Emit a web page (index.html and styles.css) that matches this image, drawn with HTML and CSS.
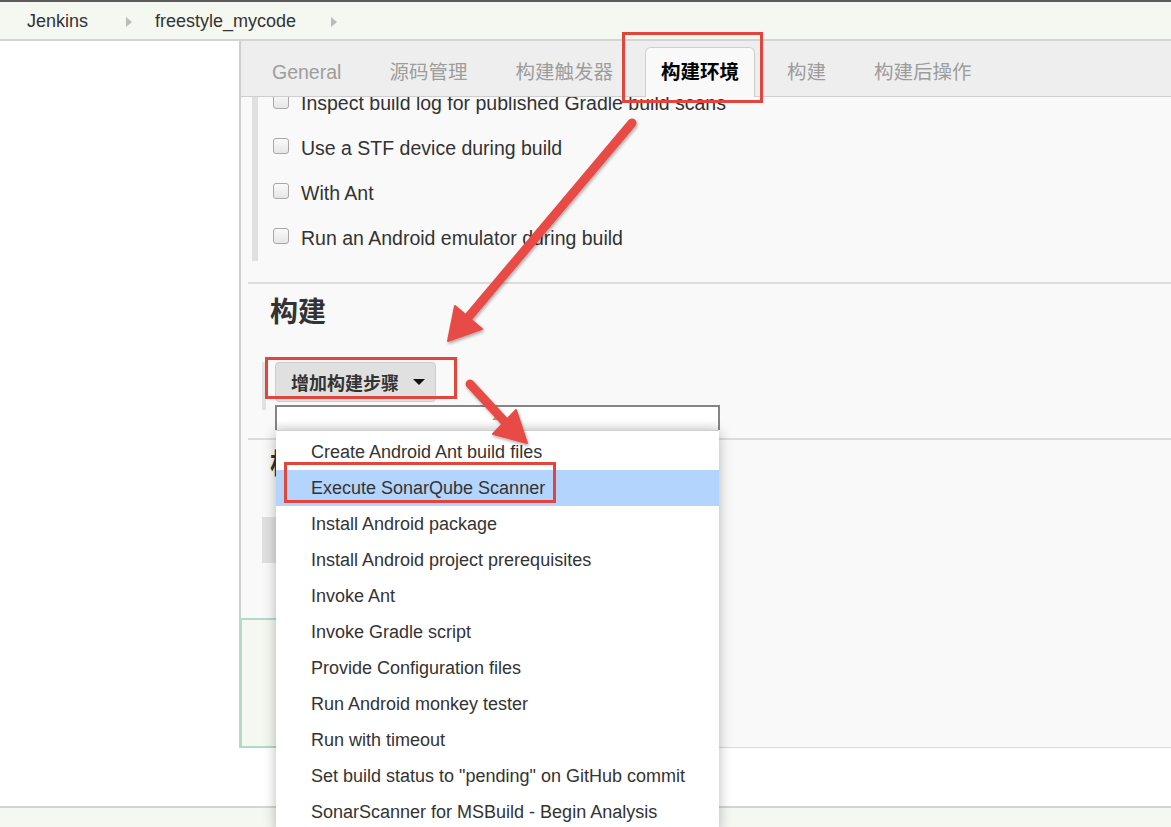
FILE: index.html
```html
<!DOCTYPE html>
<html lang="zh">
<head>
<meta charset="utf-8">
<title>freestyle_mycode Config [Jenkins]</title>
<link rel="stylesheet" href="styles.css">
</head>
<body>
<div class="app">
  <header class="crumbs">
    <span class="crumb">Jenkins</span><span class="crumb-sep sep1"></span>
    <span class="crumb">freestyle_mycode</span><span class="crumb-sep sep2"></span>
  </header>
  <div class="main">
    <aside class="side"></aside>
    <section class="panel">
      <nav class="tabs">
        <span class="tab">General</span>
        <span class="tab">源码管理</span>
        <span class="tab">构建触发器</span>
        <span class="tab active">构建环境</span>
        <span class="tab">构建</span>
        <span class="tab">构建后操作</span>
      </nav>
      <div class="content">
        <div class="env">
          <label class="opt"><span class="box"></span>Inspect build log for published Gradle build scans</label>
          <label class="opt"><span class="box"></span>Use a STF device during build</label>
          <label class="opt"><span class="box"></span>With Ant</label>
          <label class="opt"><span class="box"></span>Run an Android emulator during build</label>
        </div>
        <div class="rule"></div>
        <h2 class="heading">构建</h2>
        <div class="step-block">
          <div class="add-wrap">
            <button class="add-btn">增加构建步骤<span class="caret"></span></button>
            <div class="dropdown">
              <div class="filter"><span class="up"></span></div>
              <ul class="menu">
                <li>Create Android Ant build files</li>
                <li class="hl">Execute SonarQube Scanner</li>
                <li>Install Android package</li>
                <li>Install Android project prerequisites</li>
                <li>Invoke Ant</li>
                <li>Invoke Gradle script</li>
                <li>Provide Configuration files</li>
                <li>Run Android monkey tester</li>
                <li>Run with timeout</li>
                <li>Set build status to "pending" on GitHub commit</li>
                <li>SonarScanner for MSBuild - Begin Analysis</li>
              </ul>
            </div>
          </div>
        </div>
        <div class="rule rule2"></div>
        <h2 class="heading heading2">构建后操作</h2>
        <div class="post-add"></div>
        <div class="sticker"></div>
      </div>
    </section>
  </div>
  <div class="gap"></div>
  <footer class="footer"></footer>
</div>
<svg class="annot" width="1171" height="827" viewBox="0 0 1171 827">
  <defs>
    <filter id="sh" x="-20%" y="-20%" width="140%" height="140%">
      <feDropShadow dx="1" dy="2" stdDeviation="1.5" flood-color="#000" flood-opacity="0.3"/>
    </filter>
  </defs>
  <g filter="url(#sh)" fill="#e84c45" stroke="#e84c45">
    <line x1="632" y1="123" x2="466" y2="320" stroke-width="9" stroke-linecap="round"/>
    <polygon points="448,341 482,329 455,306" stroke-width="2" stroke-linejoin="round"/>
    <line x1="470" y1="384" x2="506" y2="423" stroke-width="9" stroke-linecap="round"/>
    <polygon points="527,443 493,434 516,410" stroke-width="2" stroke-linejoin="round"/>
  </g>
  <g fill="none" stroke="#e2453c" stroke-width="3">
    <rect x="623.5" y="33.5" width="138" height="68"/>
    <rect x="266.5" y="358.5" width="189" height="39"/>
    <rect x="285.5" y="463.5" width="269" height="38"/>
  </g>
</svg>
</body>
</html>
```

FILE: styles.css
```css
html, body {
  margin: 0;
  padding: 0;
  overflow: hidden;
  background: #fff;
}
body {
  font-family: "Liberation Sans", "Noto Sans CJK SC", Arial, sans-serif;
  color: #333;
  width: 1171px;
  height: 827px;
  position: relative;
}
.app {
  display: flex;
  flex-direction: column;
  height: 827px;
  border-top: 2px solid #5c5c5c;
  box-sizing: border-box;
}
.crumbs {
  display: flex;
  align-items: center;
  box-sizing: border-box;
  height: 39px;
  padding-top: 2px;
  background: #f5f7f1;
  border-bottom: 2px solid #d4d4d4;
  padding-left: 27px;
  font-size: 18px;
  color: #333;
  flex: none;
}
.crumb-sep {
  width: 0;
  height: 0;
  border-top: 5px solid transparent;
  border-bottom: 5px solid transparent;
  border-left: 6px solid #bbb;
}
.sep1 { margin: 0 23px 0 38px; }
.sep2 { margin-left: 35px; }
.main {
  display: flex;
  height: 707px;
  flex: none;
}
.side {
  width: 239px;
  flex: none;
  background: #fff;
}
.panel {
  flex: 1;
  display: flex;
  flex-direction: column;
  border-left: 2px solid #cfcfcf;
  border-bottom: 1px solid #d8d8d8;
  background: #f9f9f9;
}
.tabs {
  position: relative;
  z-index: 2;
  display: flex;
  align-items: flex-end;
  height: 55px;
  background: #eee;
  border-bottom: 1px solid #cfcfcf;
  padding-left: 15px;
  font-size: 19.5px;
  flex: none;
}
.tab {
  padding: 0 16px;
  margin-right: 16px;
  color: #9d9d9d;
  height: 49px;
  line-height: 50px;
  box-sizing: border-box;
}
.tab.active {
  background: #f9f9f9;
  color: #000;
  font-weight: bold;
  border: 1px solid #cfcfcf;
  border-bottom: none;
  border-radius: 6px 6px 0 0;
  padding: 0 15px;
  margin-bottom: -1px;
  height: 50px;
  line-height: 48px;
}
.content {
  display: flex;
  flex-direction: column;
  position: relative;
  flex: 1;
  min-height: 0;
}
.env {
  margin: -16px 0 0 11px;
  border-left: 6px solid #e0e0e0;
  padding-left: 15px;
}
.opt {
  display: flex;
  align-items: center;
  height: 45px;
  font-size: 19.5px;
  color: #333;
}
.box {
  width: 14px;
  height: 14px;
  border: 1px solid #a8a8a8;
  border-radius: 3px;
  background: linear-gradient(#fafafa, #e6e6e6);
  margin-right: 12px;
  margin-top: -6px;
  flex: none;
}
.rule {
  height: 2px;
  background: #dcdcdc;
  margin: 21px 0 0 7px;
  flex: none;
}
.rule2 { margin-top: 28px; }
.heading {
  margin: 9px 0 0 0;
  padding-left: 29px;
  font-size: 28px;
  line-height: 40px;
  font-weight: bold;
  color: #333;
  flex: none;
}
.heading2 { margin-top: 5px; }
.step-block {
  margin: 29px 0 0 21px;
  border-left: 4px solid #e2e2e2;
  padding: 0 0 8px 9px;
  flex: none;
}
.add-wrap {
  position: relative;
  width: 161px;
}
.add-btn {
  display: flex;
  align-items: center;
  height: 40px;
  width: 161px;
  padding: 0 0 0 15px;
  border: 1px solid #cdcdcd;
  border-radius: 4px;
  background: #e0e0e0;
  font-family: "Liberation Sans", "Noto Sans CJK SC", sans-serif;
  font-size: 18px;
  font-weight: bold;
  color: #333;
  box-sizing: border-box;
}
.caret {
  width: 0;
  height: 0;
  border-left: 6px solid transparent;
  border-right: 6px solid transparent;
  border-top: 6px solid #111;
  margin-left: 14px;
}
.dropdown {
  position: absolute;
  top: 43px;
  left: 0;
  width: 445px;
  z-index: 5;
}
.filter {
  height: 25px;
  box-sizing: border-box;
  border: 2px solid #858585;
  border-bottom: none;
  background: linear-gradient(#fff 60%, #f1f1f1);
  display: flex;
  justify-content: center;
}
.up {
  width: 0;
  height: 0;
  margin-top: 7px;
  border-left: 6px solid transparent;
  border-right: 6px solid transparent;
  border-bottom: 6px solid #a6a6a6;
}
.menu {
  list-style: none;
  margin: 0 0 0 1px;
  padding: 3px 0 0 0;
  width: 443px;
  background: #fff;
  border-top: 1px solid #d0d0d0;
  box-shadow: 0 2px 12px rgba(0, 0, 0, 0.28);
  font-size: 18px;
  color: #333;
}
.menu li {
  height: 36px;
  line-height: 36px;
  padding-left: 35px;
  white-space: nowrap;
}
.menu li.hl { background: #b3d4fc; }
.post-add {
  margin: 32px 0 0 21px;
  width: 160px;
  height: 46px;
  background: #e0e0e0;
  flex: none;
}
.sticker {
  margin: 55px 0 0 -1px;
  width: 300px;
  height: 130px;
  box-sizing: border-box;
  border: 2px solid #b3d9c8;
  background: #f5f7f1;
  flex: none;
}
.gap {
  height: 58px;
  background: #fff;
  flex: none;
}
.footer {
  flex: 1;
  background: #f5f7f1;
  border-top: 2px solid #d4d4d4;
}
.annot {
  position: absolute;
  top: 0;
  left: 0;
  pointer-events: none;
  z-index: 10;
}
```
